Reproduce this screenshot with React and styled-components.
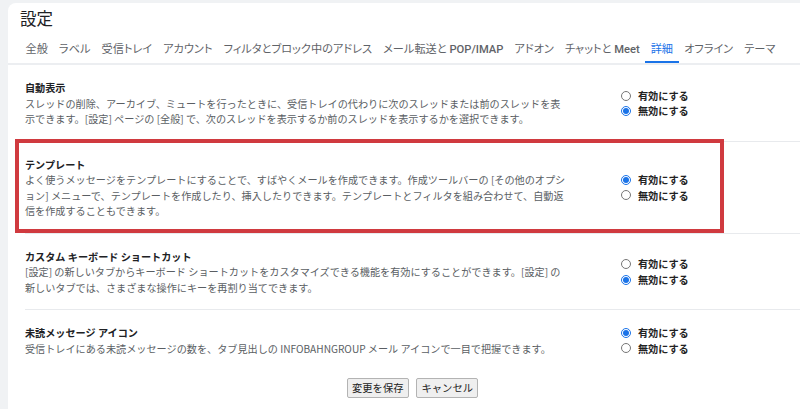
import React from "react";
import styled, { createGlobalStyle } from "styled-components";

const GlobalStyle = createGlobalStyle`
  html, body { margin: 0; padding: 0; background: #f0f2f4; overflow: hidden; }
  body { font-family: "Noto Sans CJK JP", "Noto Sans", sans-serif; }
  * { box-sizing: border-box; }
`;

const Page = styled.div`
  padding: 3px 0 0 8px;
  height: 409px;
`;

const Panel = styled.div`
  background: #ffffff;
  border-top-left-radius: 8px;
  height: 406px;
  overflow: hidden;
`;

const Header = styled.div`
  padding: 3px 0 0 12px;
`;

const Title = styled.h1`
  margin: 0;
  font-family: "Noto Sans CJK JP", sans-serif;
  font-weight: 400;
  font-size: 16.5px;
  line-height: 24px;
  color: #202124;
`;

const TabBar = styled.nav`
  display: flex;
  margin-top: 4px;
  padding-left: 12px;
  border-bottom: 2px solid #eceef1;
`;

const Tab = styled.div`
  padding: 8px 5.5px 4px;
  font-family: "Roboto", "Noto Sans CJK JP", sans-serif;
  font-feature-settings: "palt";
  font-size: 11.2px;
  line-height: 15px;
  white-space: nowrap;
  color: ${(p) => (p.$active ? "#1a73e8" : "#5f6368")};
  border-bottom: 2px solid ${(p) => (p.$active ? "#1a73e8" : "transparent")};
`;

const Latin = styled.span`
  font-weight: 500;
`;

const Content = styled.div`
  padding-left: 17px;
`;

const Row = styled.section`
  position: relative;
  display: grid;
  grid-template-columns: 596px 1fr;
  align-items: center;
  padding: 15px 0 14px;
  border-bottom: ${(p) => (p.$last ? "none" : "1px solid #e8eaed")};
`;

const Highlight = styled.div`
  position: absolute;
  left: -10px;
  top: -3px;
  width: 709px;
  height: 94px;
  border: 4px solid #d03a3f;
  pointer-events: none;
`;

const TextBlock = styled.div`
  font-size: 10.15px;
  line-height: 15.5px;
`;

const RowTitle = styled.div`
  font-weight: 700;
  color: #202124;
  white-space: nowrap;
`;

const Line = styled.span`
  display: block;
  color: #5a5e63;
  white-space: nowrap;
`;

const Radios = styled.div`
  display: flex;
  flex-direction: column;
`;

const RadioLabel = styled.label`
  display: flex;
  align-items: center;
  gap: 7px;
  font-size: 10.15px;
  line-height: 15.5px;
  font-weight: 700;
  color: #222;
  white-space: nowrap;
`;

const RadioInput = styled.input`
  width: 10px;
  height: 10px;
  margin: 0;
  accent-color: #1a73e8;
`;

const Actions = styled.div`
  display: flex;
  justify-content: center;
  gap: 7px;
  margin-top: 8px;
`;

const Button = styled.button`
  height: 20px;
  padding: 0 4.5px;
  font-family: "Noto Sans CJK JP", sans-serif;
  font-size: 10.3px;
  line-height: 18px;
  color: #222;
  background: #efefef;
  border: 1px solid #b3b3b3;
  border-radius: 2px;
`;

const tabs = [
  { label: "全般" },
  { label: "ラベル" },
  { label: "受信トレイ" },
  { label: "アカウント" },
  { label: "フィルタとブロック中のアドレス" },
  { label: "メール転送と ", latin: "POP/IMAP" },
  { label: "アドオン" },
  { label: "チャットと ", latin: "Meet" },
  { label: "詳細", active: true },
  { label: "オフライン" },
  { label: "テーマ" },
];

const rows = [
  {
    id: "auto",
    title: "自動表示",
    lines: [
      "スレッドの削除、アーカイブ、ミュートを行ったときに、受信トレイの代わりに次のスレッドまたは前のスレッドを表",
      "示できます。[設定] ページの [全般] で、次のスレッドを表示するか前のスレッドを表示するかを選択できます。",
    ],
    on: false,
  },
  {
    id: "template",
    title: "テンプレート",
    lines: [
      "よく使うメッセージをテンプレートにすることで、すばやくメールを作成できます。作成ツールバーの [その他のオプシ",
      "ョン] メニューで、テンプレートを作成したり、挿入したりできます。テンプレートとフィルタを組み合わせて、自動返",
      "信を作成することもできます。",
    ],
    on: true,
    highlight: true,
  },
  {
    id: "shortcut",
    title: "カスタム キーボード ショートカット",
    lines: [
      "[設定] の新しいタブからキーボード ショートカットをカスタマイズできる機能を有効にすることができます。[設定] の",
      "新しいタブでは、さまざまな操作にキーを再割り当てできます。",
    ],
    on: false,
  },
  {
    id: "unread",
    title: "未読メッセージ アイコン",
    lines: [
      "受信トレイにある未読メッセージの数を、タブ見出しの INFOBAHNGROUP メール アイコンで一目で把握できます。",
    ],
    on: true,
  },
];

export default function App() {
  return (
    <>
      <GlobalStyle />
      <Page>
        <Panel>
          <Header>
            <Title>設定</Title>
          </Header>
          <TabBar>
            {tabs.map((t) => (
              <Tab key={t.label} $active={t.active}>
                {t.label}
                {t.latin && <Latin>{t.latin}</Latin>}
              </Tab>
            ))}
          </TabBar>
          <Content>
            {rows.map((r, i) => (
              <Row key={r.id} $last={i === rows.length - 1}>
                <TextBlock>
                  <RowTitle>{r.title}</RowTitle>
                  {r.lines.map((l, j) => (
                    <Line key={j}>{l}</Line>
                  ))}
                </TextBlock>
                <Radios>
                  <RadioLabel>
                    <RadioInput type="radio" name={r.id} defaultChecked={r.on} />
                    有効にする
                  </RadioLabel>
                  <RadioLabel>
                    <RadioInput type="radio" name={r.id} defaultChecked={!r.on} />
                    無効にする
                  </RadioLabel>
                </Radios>
                {r.highlight && <Highlight />}
              </Row>
            ))}
            <Actions>
              <Button>変更を保存</Button>
              <Button>キャンセル</Button>
            </Actions>
          </Content>
        </Panel>
      </Page>
    </>
  );
}
